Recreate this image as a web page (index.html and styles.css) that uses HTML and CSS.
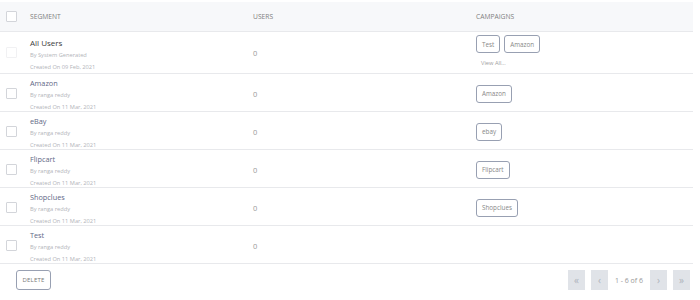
FILE: index.html
```html
<!DOCTYPE html>
<html>
<head>
<meta charset="utf-8">
<link rel="stylesheet" href="styles.css">
</head>
<body>
<div class="table">
  <div class="row head">
    <div class="cell chk"><span class="box"></span></div>
    <div class="cell">SEGMENT</div>
    <div class="cell">USERS</div>
    <div class="cell">CAMPAIGNS</div>
  </div>
  <div class="row first">
    <div class="cell chk"><span class="box disabled"></span></div>
    <div class="cell seg">
      <div class="name dark">All Users</div>
      <div class="sub">By System Generated</div>
      <div class="sub">Created On 09 Feb, 2021</div>
    </div>
    <div class="cell num">0</div>
    <div class="cell camp col">
      <div class="tags"><span class="tag">Test</span><span class="tag">Amazon</span></div>
      <div class="viewall">View All...</div>
    </div>
  </div>
  <div class="row">
    <div class="cell chk"><span class="box"></span></div>
    <div class="cell seg">
      <div class="name">Amazon</div>
      <div class="sub">By ranga reddy</div>
      <div class="sub">Created On 11 Mar, 2021</div>
    </div>
    <div class="cell num">0</div>
    <div class="cell camp"><span class="tag">Amazon</span></div>
  </div>
  <div class="row">
    <div class="cell chk"><span class="box"></span></div>
    <div class="cell seg">
      <div class="name">eBay</div>
      <div class="sub">By ranga reddy</div>
      <div class="sub">Created On 11 Mar, 2021</div>
    </div>
    <div class="cell num">0</div>
    <div class="cell camp"><span class="tag">ebay</span></div>
  </div>
  <div class="row">
    <div class="cell chk"><span class="box"></span></div>
    <div class="cell seg">
      <div class="name">Flipcart</div>
      <div class="sub">By ranga reddy</div>
      <div class="sub">Created On 11 Mar, 2021</div>
    </div>
    <div class="cell num">0</div>
    <div class="cell camp"><span class="tag">Flipcart</span></div>
  </div>
  <div class="row">
    <div class="cell chk"><span class="box"></span></div>
    <div class="cell seg">
      <div class="name">Shopclues</div>
      <div class="sub">By ranga reddy</div>
      <div class="sub">Created On 11 Mar, 2021</div>
    </div>
    <div class="cell num">0</div>
    <div class="cell camp"><span class="tag">Shopclues</span></div>
  </div>
  <div class="row">
    <div class="cell chk"><span class="box"></span></div>
    <div class="cell seg">
      <div class="name">Test</div>
      <div class="sub">By ranga reddy</div>
      <div class="sub">Created On 11 Mar, 2021</div>
    </div>
    <div class="cell num">0</div>
    <div class="cell camp"></div>
  </div>
</div>
<div class="footer">
  <button class="delete">DELETE</button>
  <div class="pager">
    <span class="pbtn">&#171;</span>
    <span class="pbtn">&#8249;</span>
    <span class="ptext">1 - 6 of 6</span>
    <span class="pbtn">&#8250;</span>
    <span class="pbtn">&#187;</span>
  </div>
</div>
</body>
</html>
```
FILE: styles.css
```css
* { box-sizing: border-box; }
body {
  margin: 0;
  padding-top: 2px;
  width: 693px;
  font-family: "Open Sans", "Liberation Sans", sans-serif;
  font-weight: 400;
  background: #fff;
  color: #777;
}
.table { width: 693px; }
.row {
  display: grid;
  grid-template-columns: 30px 223px 223px 217px;
  border-bottom: 1px solid #e8e9ec;
  height: 38px;
}
.row.head {
  background: #f7f8fa;
  height: 30px;
  font-size: 6.7px;
  color: #808080;
}
.row.first { height: 42px; }
.cell {
  display: flex;
  align-items: center;
  min-width: 0;
}
.chk { padding-left: 6px; }
.box {
  width: 11px;
  height: 11px;
  border: 1px solid #d3d5da;
  border-radius: 1px;
  background: #fff;
}
.box.disabled { border-color: #f1f1f3; }
.seg {
  flex-direction: column;
  align-items: flex-start;
  justify-content: flex-start;
  padding-top: 3px;
}
.name {
  font-size: 7.3px;
  line-height: 12px;
  color: #5f6886;
}
.name.dark { color: #3c3c3c; font-size: 8px; padding-top: 2px; }
.sub {
  font-size: 5.7px;
  line-height: 12px;
  color: #b2b4b9;
}
.num { font-size: 7.5px; color: #999; }
.camp { font-size: 6.5px; }
.camp.col {
  flex-direction: column;
  align-items: flex-start;
  justify-content: flex-start;
  padding-top: 3px;
}
.tags { display: flex; gap: 4px; }
.tag {
  display: inline-flex;
  align-items: center;
  height: 18px;
  padding: 0 5px;
  border: 1px solid #98a0b2;
  border-radius: 3px;
  color: #888;
  font-size: 6.3px;
}
.viewall {
  margin-top: 4px;
  padding-left: 5px;
  font-size: 5.7px;
  color: #a0a0a0;
  line-height: 12px;
}
.footer {
  display: flex;
  justify-content: space-between;
  align-items: center;
  padding: 6px 3px 0 16px;
}
.delete {
  font-family: inherit;
  font-size: 6px;
  color: #777;
  background: #fff;
  border: 1px solid #98a0b2;
  border-radius: 3px;
  height: 20px;
  width: 35px;
  padding: 0;
  letter-spacing: 0.2px;
}
.pager { display: flex; align-items: center; gap: 6px; }
.pbtn {
  width: 17px;
  height: 20px;
  background: #e0e3e8;
  color: #aeb3bb;
  display: flex;
  align-items: center;
  justify-content: center;
  font-size: 10px;
  padding-bottom: 1px;
}
.ptext { font-size: 7px; color: #999; padding: 0 1px; }
```
